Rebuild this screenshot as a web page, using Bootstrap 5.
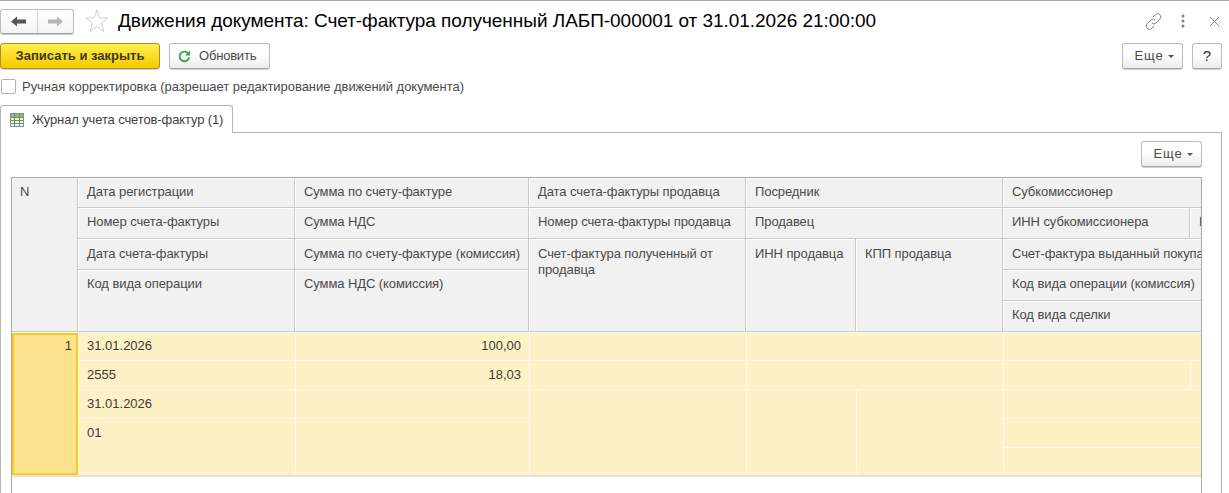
<!DOCTYPE html>
<html lang="ru"><head><meta charset="utf-8"><title>Движения документа</title>
<link href="https://cdn.jsdelivr.net/npm/bootstrap@5.3.0/dist/css/bootstrap.min.css" rel="stylesheet">
<style>
html,body{height:493px;overflow:hidden;background:#fff}
body{font-family:"Liberation Sans",Arial,sans-serif;font-size:13px;line-height:16px;color:#4a4a4a;border-top:1px solid #a9a9a9}
.topbar{height:42px;padding-top:8px}
.navbox{width:74px;height:25px;border:1px solid #bdbdbd;border-bottom-color:#a0a0a0;border-radius:3px;background:linear-gradient(#fff,#f3f3f3);box-shadow:0 1px 0 #ccc}
.navbox span{flex:1 1 0;height:100%}
.navbox span+span{border-left:1px solid #d0d0d0}
.staricon{margin-left:11px}
.startitle{font-size:19px;line-height:24px;color:#000;margin-left:9px;letter-spacing:-.04px}
.tool-icons{margin-right:9px;height:24px}
.linkicon{margin-right:19px}
.dotsicon{margin-right:24px}
.cbtn{height:26px;padding:0 8px;font-size:13px;line-height:24px;color:#4a4a4a;border:1px solid #bcbcbc;border-bottom-color:#a6a6a6;border-radius:3px;background:linear-gradient(#fff 40%,#ececec);box-shadow:0 1px 0 #d0d0d0;--bs-btn-hover-color:#4a4a4a}
.cbtn-main{width:160px;font-weight:700;color:#3d3a1e;background:linear-gradient(#fff04d,#f7c900);border-color:#a8911a;padding:0}
.cbtn-refresh{width:101px;margin-left:9px;padding:0 0 0 8px;gap:8px;letter-spacing:-.2px}
.cbtn-more{width:61px;padding:0 0 0 4px;letter-spacing:.8px}
.cbtn-help{width:30px;padding:0;margin-left:9px;margin-right:7px;font-size:15px;color:#333}
.caret-d{display:inline-block;margin-left:5px;border-top:3px solid #555;border-left:3px solid transparent;border-right:3px solid transparent;vertical-align:2px}
.checkline{height:36px;padding:10px 0 0 1px;letter-spacing:-.04px}
.boxcheck{width:15px;height:15px;border:1px solid #b0b0b0;border-radius:2px;background:#fff;margin:0 6px 0 0;flex:none}
.tabstrip{height:27px}
.tabhead{width:233px;height:28px;border:1px solid #b5b5b5;border-bottom:0;border-radius:3px 3px 0 0;background:#fff;padding-left:9px;color:#3f3f3f;position:relative;z-index:1;letter-spacing:-.12px}
.tabbody{width:1222px;height:400px;border:1px solid #b5b5b5;padding:8px 19px 0 10px}
.morerow{height:36px}
.grid-frame{width:1191px;height:340px;border-left:1px solid #a9a9a9;border-right:1px solid #a9a9a9;border-top:1px solid #a9a9a9}
.cellgrid{display:grid;column-gap:1px;row-gap:1px;overflow:hidden}
.head-grid{grid-template-columns:65px 216px 233px 216px 109px 146px 186px 11px;grid-template-rows:29px 30px 30px 30px 30px;background:#c9c9c9;border-bottom:1px solid #c9c9c9}
.data-grid{grid-template-columns:66px 216px 233px 216px 109px 146px 186px 10px;grid-template-rows:27px 28px 28px 28px 27px;background:#fff9e8;margin-top:1px;border-bottom:2px solid #e2e2e2}
.hc{background:#f1f1f1;padding:6px 7px 0 9px;overflow:hidden;white-space:nowrap;box-shadow:inset 1px 1px 0 #fff;letter-spacing:-.08px}
.hc-n{padding-left:8px;box-shadow:none}
.hc-low{padding-top:7px}
.hc-wrap{white-space:normal}
.dc{background:#fdf1c6;padding:6px 8px 0 8px;color:#3f3a35;overflow:hidden;white-space:nowrap}
.dc-top{padding-top:5px}
.num{text-align:right}
.nowcell{background:#fee38f;border:2px solid #fdc91f;text-align:right;padding:3px 4px 0 0;color:#3f3a35}
.rs2{grid-row:span 2}.rs3{grid-row:span 3}.rs5{grid-row:span 5}.cs2{grid-column:span 2}
</style></head><body>
<div class="topbar d-flex align-items-start">
  <div class="navbox d-flex align-items-center">
    <span class="d-flex align-items-center justify-content-center"><svg width="15" height="11" viewBox="0 0 15 11"><path d="M0 5.500 6 .5v3h9v4H6v3z" fill="#555"/></svg></span>
    <span class="d-flex align-items-center justify-content-center"><svg width="15" height="11" viewBox="0 0 15 11"><path d="M15 5.500 9 .5v3H0v4h9v3z" fill="#b4b4b4"/></svg></span>
  </div>
  <svg class="staricon" width="24" height="24" viewBox="0 0 24 24"><path d="M12 1l2.900 8H23l-6.500 5 2.400 8.500L12 17.500l-6.900 5L7.500 14 1 9h8.100z" fill="#fff" stroke="#ccd0d4"/></svg>
  <div class="startitle">Движения документа: Счет-фактура полученный ЛАБП-000001 от 31.01.2026 21:00:00</div>
  <div class="tool-icons ms-auto d-flex align-items-center">
    <svg class="linkicon" width="17" height="17" viewBox="0 0 17 17" fill="none" stroke="#808080" stroke-width="1"><path d="M8 4l2.300-2.300a3 3 0 0 1 4.500 0 3 3 0 0 1 0 4.500L11 10a3 3 0 0 1-4.300 0"/><path d="M9 13l-2.300 2.300a3 3 0 0 1-4.500 0 3 3 0 0 1 0-4.500L6 7a3 3 0 0 1 4.300 0"/></svg>
    <svg class="dotsicon" width="4" height="14" viewBox="0 0 4 14" fill="#808080"><circle cx="2" cy="2" r="1.500"/><circle cx="2" cy="7" r="1.500"/><circle cx="2" cy="12" r="1.500"/></svg>
    <svg width="11" height="11" viewBox="0 0 11 11" stroke="#808080"><path d="M1 1l9 9M10 1l-9 9"/></svg>
  </div>
</div>
<div class="d-flex align-items-start">
  <button class="btn cbtn cbtn-main">Записать и закрыть</button>
  <button class="btn cbtn cbtn-refresh d-flex align-items-center"><svg width="13" height="13" viewBox="0 0 14 14" fill="none"><path d="M11.500 4.500A5.200 5.200 0 1 0 12 8" stroke="#3aa63a" stroke-width="2"/><path d="M13 .5v5.500H7.500z" fill="#3aa63a"/></svg>Обновить</button>
  <button class="btn cbtn cbtn-more ms-auto">Еще<i class="caret-d"></i></button>
  <button class="btn cbtn cbtn-help">?</button>
</div>
<div class="checkline d-flex align-items-start">
  <span class="boxcheck"></span><span>Ручная корректировка (разрешает редактирование движений документа)</span>
</div>
<div class="tabstrip">
  <div class="tabhead d-flex align-items-center gap-2">
    <svg width="14" height="14" viewBox="0 0 14 14"><rect x=".5" y=".5" width="13" height="13" fill="#eef3e6" stroke="#7d8fa3"/><rect x="1" y="1" width="12" height="3" fill="#8cc152"/><path d="M1 4.500h12M1 7.500h12M1 10.500h12M4.500 1v12M9.500 1v12" stroke="#6f8a6a"/></svg>
    <span>Журнал учета счетов-фактур (1)</span>
  </div>
</div>
<div class="tabbody">
  <div class="morerow d-flex justify-content-end"><button class="btn cbtn cbtn-more">Еще<i class="caret-d"></i></button></div>
  <div class="grid-frame">
    <div class="cellgrid head-grid">
      <div class="hc hc-n rs5">N</div><div class="hc">Дата регистрации</div><div class="hc">Сумма по счету-фактуре</div><div class="hc">Дата счета-фактуры продавца</div><div class="hc cs2">Посредник</div><div class="hc cs2">Субкомиссионер</div>
      <div class="hc">Номер счета-фактуры</div><div class="hc">Сумма НДС</div><div class="hc">Номер счета-фактуры продавца</div><div class="hc cs2">Продавец</div><div class="hc">ИНН субкомиссионера</div><div class="hc">КПП субкомиссионера</div>
      <div class="hc hc-low">Дата счета-фактуры</div><div class="hc hc-low">Сумма по счету-фактуре (комиссия)</div><div class="hc hc-low hc-wrap rs3">Счет-фактура полученный от продавца</div><div class="hc hc-low rs3">ИНН продавца</div><div class="hc hc-low rs3">КПП продавца</div><div class="hc hc-low cs2">Счет-фактура выданный покупателю</div>
      <div class="hc rs2">Код вида операции</div><div class="hc rs2">Сумма НДС (комиссия)</div><div class="hc cs2">Код вида операции (комиссия)</div>
      <div class="hc cs2">Код вида сделки</div>
    </div>
    <div class="cellgrid data-grid">
      <div class="nowcell rs5">1</div><div class="dc dc-top">31.01.2026</div><div class="dc dc-top num">100,00</div><div class="dc"></div><div class="dc cs2"></div><div class="dc cs2"></div>
      <div class="dc">2555</div><div class="dc num">18,03</div><div class="dc"></div><div class="dc cs2"></div><div class="dc"></div><div class="dc"></div>
      <div class="dc">31.01.2026</div><div class="dc"></div><div class="dc rs3"></div><div class="dc rs3"></div><div class="dc rs3"></div><div class="dc cs2"></div>
      <div class="dc rs2">01</div><div class="dc rs2"></div><div class="dc cs2"></div>
      <div class="dc cs2"></div>
    </div>
  </div>
</div>
<script src="https://cdn.jsdelivr.net/npm/bootstrap@5.3.0/dist/js/bootstrap.bundle.min.js"></script>
</body></html>
